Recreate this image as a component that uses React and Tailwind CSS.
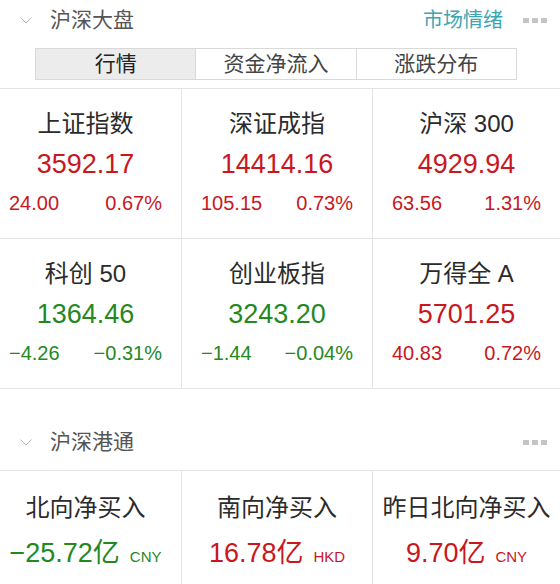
import React from 'react';

const RED = 'text-[#c8171e]';
const GREEN = 'text-[#23891f]';

const Chevron = () => (
  <svg width="12" height="7" viewBox="0 0 12 7" className="ml-[20px] mr-[18px]">
    <polyline points="0.5,0.5 6,6 11.5,0.5" fill="none" stroke="#b5b5b5" strokeWidth="1" />
  </svg>
);

const Dots = () => (
  <div className="flex gap-[3px] mr-[13px]">
    <span className="block w-[6px] h-[5px] bg-[#c4c4c4]" />
    <span className="block w-[6px] h-[5px] bg-[#c4c4c4]" />
    <span className="block w-[6px] h-[5px] bg-[#c4c4c4]" />
  </div>
);

const indices = [
  { name: '上证指数', value: '3592.17', chg: '24.00', pct: '0.67%', up: true },
  { name: '深证成指', value: '14414.16', chg: '105.15', pct: '0.73%', up: true },
  { name: '沪深 300', value: '4929.94', chg: '63.56', pct: '1.31%', up: true },
  { name: '科创 50', value: '1364.46', chg: '−4.26', pct: '−0.31%', up: false },
  { name: '创业板指', value: '3243.20', chg: '−1.44', pct: '−0.04%', up: false },
  { name: '万得全 A', value: '5701.25', chg: '40.83', pct: '0.72%', up: true },
];

const flows = [
  { name: '北向净买入', value: '−25.72亿', unit: 'CNY', up: false },
  { name: '南向净买入', value: '16.78亿', unit: 'HKD', up: true },
  { name: '昨日北向净买入', value: '9.70亿', unit: 'CNY', up: true },
];

const cellBorder = (i) => (i % 3 === 2 ? '' : 'border-r border-[#e4e4e4]');

const IndexCell = ({ item, i }) => {
  const color = item.up ? RED : GREEN;
  return (
    <div className={`h-[150px] flex flex-col items-center pt-[23px] border-b border-[#e4e4e4] ${cellBorder(i)}`}>
      <div className="text-[24px] leading-[24px] text-[#2b2b2b] whitespace-pre">{item.name}</div>
      <div className={`mt-[13px] text-[27px] leading-[30px] ${color}`}>{item.value}</div>
      <div className={`mt-[13px] w-full flex justify-between px-[19px] text-[20px] leading-[22px] ${color}`}>
        <span>{item.chg}</span>
        <span>{item.pct}</span>
      </div>
    </div>
  );
};

const FlowCell = ({ item, i }) => {
  const color = item.up ? RED : GREEN;
  return (
    <div className={`h-[113px] flex flex-col items-center pt-[25px] ${cellBorder(i)}`}>
      <div className="text-[24px] leading-[24px] text-[#2b2b2b]">{item.name}</div>
      <div className={`mt-[18px] flex items-baseline leading-[30px] ${color}`}>
        <span className="text-[27px]">{item.value}</span>
        <span className="ml-[10px] text-[15px]">{item.unit}</span>
      </div>
    </div>
  );
};

export default function App() {
  const font = { fontFamily: '"Liberation Sans", "Noto Sans CJK SC", sans-serif' };
  return (
    <div className="w-[560px] h-[584px] overflow-hidden bg-white" style={font}>
      {/* 沪深大盘 header */}
      <div className="h-[40px] flex items-center">
        <Chevron />
        <span className="text-[21px] text-[#555]">沪深大盘</span>
        <span className="ml-auto mr-[20px] text-[20px] text-[#3aa6b1]">市场情绪</span>
        <Dots />
      </div>

      {/* tabs */}
      <div className="mt-[8px] ml-[35px] w-[482px] h-[32px] flex border border-[#d9d9d9]">
        <div className="flex-1 flex items-center justify-center bg-[#ececec] text-[21px] text-[#222] border-r border-[#d9d9d9]">行情</div>
        <div className="flex-1 flex items-center justify-center text-[21px] text-[#444] border-r border-[#d9d9d9]">资金净流入</div>
        <div className="flex-1 flex items-center justify-center text-[21px] text-[#444]">涨跌分布</div>
      </div>

      {/* index grid */}
      <div className="mt-[8px] border-t border-[#e4e4e4] -ml-[10px] w-[570px] grid grid-cols-[192px_191px_1fr]">
        {indices.map((it, i) => (
          <IndexCell key={it.name} item={it} i={i} />
        ))}
      </div>

      {/* 沪深港通 header */}
      <div className="h-[81px] flex items-end pb-[17px]">
        <div className="h-[22px] flex items-center w-full">
          <Chevron />
          <span className="text-[21px] text-[#555]">沪深港通</span>
          <span className="ml-auto" />
          <Dots />
        </div>
      </div>

      <div className="border-t border-[#e4e4e4] -ml-[10px] w-[570px] grid grid-cols-[192px_191px_1fr]">
        {flows.map((it, i) => (
          <FlowCell key={it.name} item={it} i={i} />
        ))}
      </div>
    </div>
  );
}
